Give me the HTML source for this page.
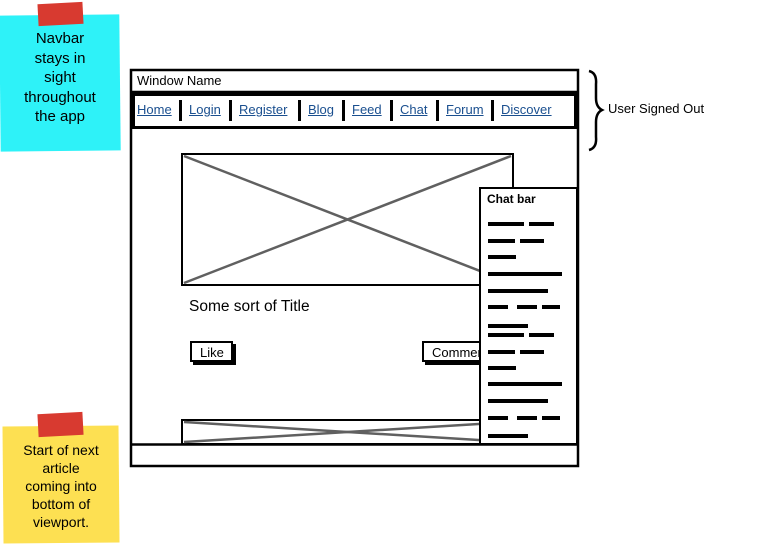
<!DOCTYPE html>
<html><head><meta charset="utf-8"><style>
*{margin:0;padding:0;box-sizing:border-box}
body{width:768px;height:544px;background:#fff;position:relative;overflow:hidden;font-family:"Liberation Sans",sans-serif;color:#000}
.a{position:absolute}
.note{position:absolute;text-align:center;font-size:15px;line-height:19.5px}
.nav{position:absolute;top:102px;font-size:13px;color:#1a4f8f;text-decoration:underline}
.sep{position:absolute;top:100px;width:3px;height:21px;background:#000}
.btn{position:absolute;border:2px solid #000;background:#fff;font-size:13px;box-shadow:3px 3px 0 #000;padding:2px 0 0 8px}
</style></head><body>
<div class="a" style="left:0;top:15px;width:120px;height:136px;background:#2ef2f8;transform:rotate(-0.6deg)"></div>
<div class="a" style="left:38px;top:3px;width:45px;height:22px;background:#d83a30;transform:rotate(-3deg)"></div>
<div class="note" style="left:0;top:29px;width:120px">Navbar<br>stays in<br>sight<br>throughout<br>the app</div>
<div class="a" style="left:3px;top:426px;width:116px;height:117px;background:#fde052;transform:rotate(-0.5deg)"></div>
<div class="a" style="left:38px;top:413px;width:45px;height:23px;background:#d83a30;transform:rotate(-3deg)"></div>
<div class="note" style="left:3px;top:441px;width:116px;line-height:18px;font-size:14px">Start of next<br>article<br>coming into<br>bottom of<br>viewport.</div>

<svg class="a" style="left:0;top:0" width="768" height="544">
<rect x="131" y="70" width="447" height="396" fill="#fff" stroke="#000" stroke-width="2.5"/>
<line x1="131" y1="92" x2="578" y2="92" stroke="#000" stroke-width="2.5"/>
<rect x="133.5" y="94.5" width="442" height="33" fill="#fff" stroke="#000" stroke-width="3"/>
<line x1="131" y1="444.5" x2="578" y2="444.5" stroke="#000" stroke-width="2.5"/>
<rect x="182" y="154" width="331" height="131" fill="#fff" stroke="#000" stroke-width="2"/>
<line x1="184" y1="156" x2="511" y2="283" stroke="#606060" stroke-width="2.5"/>
<line x1="184" y1="283" x2="511" y2="156" stroke="#606060" stroke-width="2.5"/>
<rect x="182" y="420" width="331" height="24" fill="#fff" stroke="#000" stroke-width="2"/>
<line x1="184" y1="422" x2="511" y2="442" stroke="#606060" stroke-width="2.5"/>
<line x1="184" y1="442" x2="511" y2="422" stroke="#606060" stroke-width="2.5"/>
<path d="M589 71 Q597 73 596 84 L596 98 Q596 107 602 110 Q596 113 596 122 L596 137 Q597 148 589 150" fill="none" stroke="#000" stroke-width="2.5"/>
</svg>

<div class="a" style="left:137px;top:73px;font-size:13px">Window Name</div>
<div class="nav" style="left:137px">Home</div>
<div class="sep" style="left:179px"></div>
<div class="nav" style="left:189px">Login</div>
<div class="sep" style="left:229px"></div>
<div class="nav" style="left:239px">Register</div>
<div class="sep" style="left:298px"></div>
<div class="nav" style="left:308px">Blog</div>
<div class="sep" style="left:342px"></div>
<div class="nav" style="left:352px">Feed</div>
<div class="sep" style="left:390px"></div>
<div class="nav" style="left:400px">Chat</div>
<div class="sep" style="left:436px"></div>
<div class="nav" style="left:446px">Forum</div>
<div class="sep" style="left:491px"></div>
<div class="nav" style="left:501px">Discover</div>
<div class="a" style="left:608px;top:101px;font-size:13px">User Signed Out</div>

<div class="a" style="left:189px;top:298px;font-size:15.5px">Some sort of Title</div>
<div class="btn" style="left:190px;top:341px;width:43px;height:21px">Like</div>
<div class="btn" style="left:422px;top:341px;width:80px;height:21px;overflow:hidden;white-space:nowrap">Comment</div>

<div class="a" style="left:479px;top:187px;width:99px;height:258px;background:#fff;border:2px solid #000"></div>
<div class="a" style="left:487px;top:192px;font-size:12px;font-weight:bold">Chat bar</div>
<svg class="a" style="left:0;top:0" width="768" height="544">
<g stroke="#000" stroke-width="4">
<line x1="488" y1="224" x2="524" y2="224"/><line x1="529" y1="224" x2="554" y2="224"/>
<line x1="488" y1="241" x2="515" y2="241"/><line x1="520" y1="241" x2="544" y2="241"/>
<line x1="488" y1="257" x2="516" y2="257"/>
<line x1="488" y1="274" x2="562" y2="274"/>
<line x1="488" y1="291" x2="548" y2="291"/>
<line x1="488" y1="307" x2="508" y2="307"/><line x1="517" y1="307" x2="537" y2="307"/><line x1="542" y1="307" x2="560" y2="307"/>
<line x1="488" y1="326" x2="528" y2="326"/>
<line x1="488" y1="335" x2="524" y2="335"/><line x1="529" y1="335" x2="554" y2="335"/>
<line x1="488" y1="352" x2="515" y2="352"/><line x1="520" y1="352" x2="544" y2="352"/>
<line x1="488" y1="368" x2="516" y2="368"/>
<line x1="488" y1="384" x2="562" y2="384"/>
<line x1="488" y1="401" x2="548" y2="401"/>
<line x1="488" y1="418" x2="508" y2="418"/><line x1="517" y1="418" x2="537" y2="418"/><line x1="542" y1="418" x2="560" y2="418"/>
<line x1="488" y1="436" x2="528" y2="436"/>
</g></svg>
</body></html>
